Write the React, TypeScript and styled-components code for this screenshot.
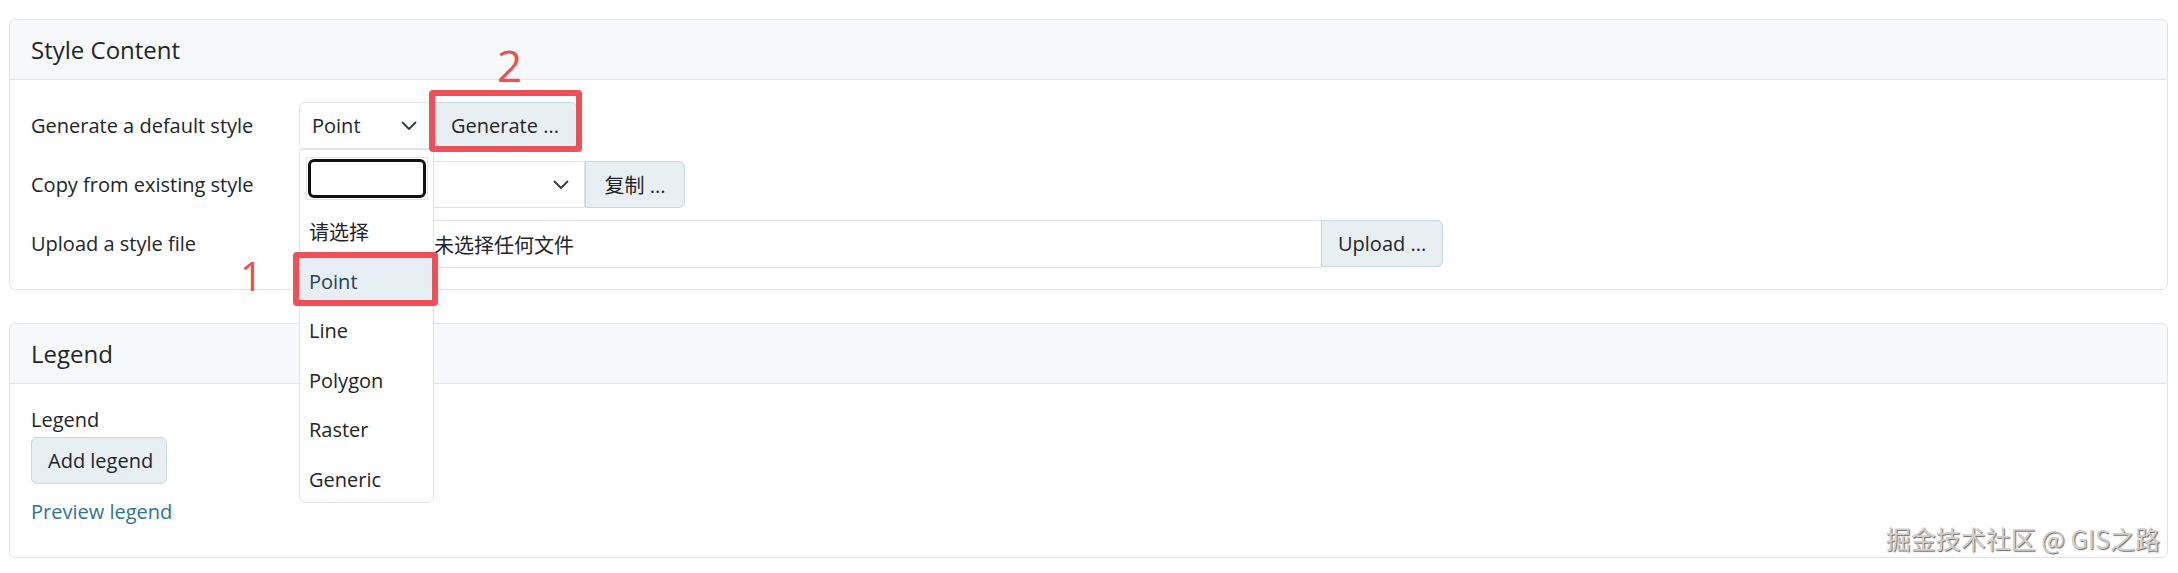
import React from 'react'
import styled, { createGlobalStyle } from 'styled-components'

const GlobalStyle = createGlobalStyle`
html, body {
  margin: 0;
  padding: 0;
  background: #ffffff;
}
body {
  font-family: "Open Sans", "Noto Sans CJK SC", sans-serif;
  color: #212529;
}
* {
  box-sizing: border-box;
}
`

const Page = styled.div`
position: relative;
width: 2178px;
height: 573px;
padding: 19px 10px 0 9px;
display: flex;
flex-direction: column;
gap: 33px;
overflow: hidden;
`

const Card = styled.section`
border: 1px solid #e1e4e7;
border-radius: 6px;
background: #ffffff;
`

const CardHeader = styled.div`
height: 60px;
display: flex;
align-items: center;
padding: 0 21px;
background: #f7f8f9;
border-bottom: 1px solid #e3e5e8;
border-radius: 6px 6px 0 0;
font-size: 24px;
`

const FormBody = styled.div`
padding: 22px 20px 22px 21px;
display: flex;
flex-direction: column;
gap: 12px;
`

const Row = styled.div`
display: grid;
grid-template-columns: 268px auto;
align-items: center;
height: 47px;
`

const Label = styled.label`
font-size: 20px;
`

const Group = styled.div`
position: relative;
display: flex;
height: 47px;
`

const Select = styled.div<{ $w: number }>`
width: ${p => p.$w}px;
height: 47px;
display: flex;
align-items: center;
justify-content: space-between;
padding: 0 15px 0 12px;
border: 1px solid #dee2e6;
border-radius: 6px 0 0 6px;
background: #ffffff;
font-size: 20px;
`

const Button = styled.button<{ $w?: number; $joined?: boolean }>`
width: ${p => (p.$w ? `${p.$w}px` : 'auto')};
height: 47px;
padding: 0 16px;
background: #e8eff3;
border: 1px solid #c6d9e0;
border-radius: ${p => (p.$joined ? '0 6px 6px 0' : '6px')};
color: #212529;
font-family: inherit;
font-size: 20px;
white-space: nowrap;
cursor: pointer;
`

const FileBox = styled.div`
width: 1022px;
height: 48px;
display: flex;
align-items: center;
border: 1px solid #dee2e6;
border-right: none;
border-radius: 6px 0 0 6px;
overflow: hidden;
font-size: 20px;
`

// the "choose file" part sits under the open menu, only its box is kept
const FilePick = styled.span`
width: 120px;
height: 100%;
margin-right: 14px;
background: #e9ecef;
border-right: 1px solid #dee2e6;
`

const Menu = styled.div`
position: absolute;
top: 100%;
left: 0;
width: 135px;
z-index: 10;
background: #ffffff;
border: 1px solid #dee2e6;
border-radius: 0 0 6px 6px;
`

const SearchWrap = styled.div`
margin: 7px 5px 5px 6px;
padding: 1px;
border: 1px solid #e2e2e2;
`

const Search = styled.input`
display: block;
width: 100%;
height: 39px;
border: 3px solid #111111;
border-radius: 6px;
outline: none;
background: #ffffff;
`

const Option = styled.div<{ $active?: boolean }>`
height: 49.5px;
display: flex;
align-items: center;
padding: 4px 0 0 9px;
font-size: 20px;
background: ${p => (p.$active ? '#e7eef4' : 'transparent')};
color: ${p => (p.$active ? '#1d4357' : '#212529')};
`

const LegendBody = styled.div`
padding: 21px 21px 30px;
font-size: 20px;
`

const LegendLabel = styled.div`
line-height: 30px;
`

const AddButton = styled(Button)`
display: block;
margin-top: 2px;
width: 136px;
`

const PreviewLink = styled.a`
display: block;
width: max-content;
margin-top: 13px;
line-height: 30px;
color: #2f7397;
text-decoration: none;
`

const Mark = styled.div<{ $x: number; $y: number; $w: number; $h: number }>`
position: absolute;
left: ${p => p.$x}px;
top: ${p => p.$y}px;
width: ${p => p.$w}px;
height: ${p => p.$h}px;
border: 6px solid #ef4f56;
border-radius: 4px;
z-index: 20;
pointer-events: none;
`

const Step = styled.span<{ $x: number; $y: number; $size: number }>`
position: absolute;
left: ${p => p.$x}px;
top: ${p => p.$y}px;
font-size: ${p => p.$size}px;
font-weight: 400;
line-height: 1;
color: #ef4f56;
z-index: 20;
`

const Watermark = styled.div`
position: absolute;
right: 18px;
top: 526px;
font-family: "Noto Sans CJK SC", "Open Sans", sans-serif;
font-size: 25px;
line-height: 1;
color: #cfcfcf;
text-shadow: 1px 1px 1px #6a6a6a;
`

const Chevron = () => (
    <svg width="16" height="10" viewBox="0 0 16 10" fill="none">
        <polyline points="1.5,1.5 8,8 14.5,1.5" stroke="#343a40" strokeWidth="1.8" strokeLinecap="round" strokeLinejoin="round" />
    </svg>
)

const geometries = ['请选择', 'Point', 'Line', 'Polygon', 'Raster', 'Generic']

export default function App(): JSX.Element {
    return (
        <Page>
            <GlobalStyle />
            <Card>
                <CardHeader>Style Content</CardHeader>
                <FormBody>
                    <Row>
                        <Label>Generate a default style</Label>
                        <Group>
                            <Select $w={134}>
                                <span>Point</span>
                                <Chevron />
                            </Select>
                            <Button $w={144} $joined>Generate ...</Button>
                            <Menu>
                                <SearchWrap>
                                    <Search readOnly />
                                </SearchWrap>
                                {geometries.map(g => (
                                    <Option key={g} $active={g === 'Point'}>{g}</Option>
                                ))}
                            </Menu>
                        </Group>
                    </Row>
                    <Row>
                        <Label>Copy from existing style</Label>
                        <Group>
                            <Select $w={286}>
                                <span />
                                <Chevron />
                            </Select>
                            <Button $w={100} $joined>复制 ...</Button>
                        </Group>
                    </Row>
                    <Row>
                        <Label>Upload a style file</Label>
                        <Group>
                            <FileBox>
                                <FilePick />
                                <span>未选择任何文件</span>
                            </FileBox>
                            <Button $w={122} $joined>Upload ...</Button>
                        </Group>
                    </Row>
                </FormBody>
            </Card>
            <Card>
                <CardHeader>Legend</CardHeader>
                <LegendBody>
                    <LegendLabel>Legend</LegendLabel>
                    <AddButton>Add legend</AddButton>
                    <PreviewLink href="#">Preview legend</PreviewLink>
                </LegendBody>
            </Card>

            <Mark $x={429} $y={90} $w={153} $h={62} />
            <Step $x={497} $y={43} $size={44}>2</Step>
            <Mark $x={293} $y={252} $w={145} $h={54} />
            <Step $x={240} $y={256} $size={40}>1</Step>

            <Watermark>掘金技术社区 @ GIS之路</Watermark>
        </Page>
    )
}
